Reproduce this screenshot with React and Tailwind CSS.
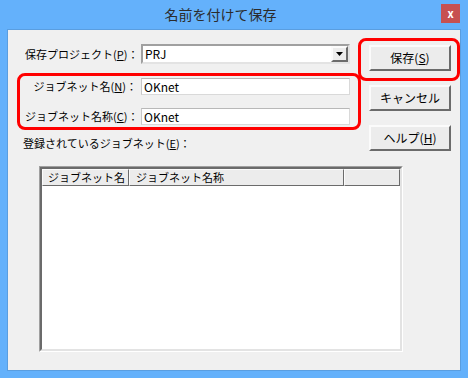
import React from 'react'

const font = { fontFamily: '"Noto Sans CJK JP", "Noto Sans", sans-serif' }

function Btn({ children }) {
  return (
    <div className="flex h-[26px] w-[82px] items-center justify-center whitespace-nowrap border-2 border-t-[#fbfbfb] border-l-[#fbfbfb] border-r-[#6b6b6b] border-b-[#6b6b6b] bg-[#ececec] text-[12px] leading-none text-black">
      {children}
    </div>
  )
}

function Field({ value }) {
  return (
    <div className="flex h-[17px] w-[209px] shrink-0 items-center border border-[#d9d9d9] border-t-[#b8b8b8] border-l-[#c8c8c8] bg-white pl-[2px] text-[12px] leading-none">
      {value}
    </div>
  )
}

export default function App() {
  return (
    <div className="h-[378px] w-[468px] overflow-hidden bg-[#64b1fb] text-black" style={font}>
      {/* title bar */}
      <div className="flex h-[29px] items-start">
        <div className="w-[441px] pt-[5px] text-center text-[14px] leading-[18px] text-[#2b2b2b]">
          名前を付けて保存
        </div>
        <div className="mt-[4px] flex h-[19px] w-[19px] items-center justify-center bg-[#c75050] text-[11px] font-bold leading-none text-white">
          x
        </div>
      </div>

      {/* client area */}
      <div className="mx-[7px] h-[342px] border border-[#5a9ee0] bg-[#f0f0f0] pl-[9px]">
        <div className="flex">
          {/* left column */}
          <div className="w-[341px] shrink-0">
            <div className="mt-[14px] flex h-[20px] items-center">
              <div className="ml-[8px] w-[116px] shrink-0 whitespace-nowrap text-[11px] leading-none">
                保存プロジェクト(<u>P</u>)：
              </div>
              <div className="flex h-[20px] w-[209px] shrink-0 items-stretch border-2 border-t-[#a0a0a0] border-l-[#a0a0a0] border-r-[#e3e3e3] border-b-[#e3e3e3] bg-white">
                <div className="flex flex-1 items-center pl-[2px] text-[12px] leading-none">PRJ</div>
                <div className="flex w-[17px] items-center justify-center border-2 border-t-[#fbfbfb] border-l-[#fbfbfb] border-r-[#6b6b6b] border-b-[#6b6b6b] bg-[#ececec]">
                  <svg width="7" height="4" viewBox="0 0 7 4">
                    <path d="M0 0h7L3.5 4z" fill="#000" />
                  </svg>
                </div>
              </div>
            </div>

            <div className="mt-[9px] flex h-[57px] w-[344px] flex-col gap-[13px] rounded-[8px] border-[3px] border-[#ff0000] pl-[5px] pt-[2px]">
              <div className="flex h-[17px] items-center">
                <div className="w-[116px] shrink-0 whitespace-nowrap pr-[4px] text-right text-[11px] leading-none">
                  ジョブネット名(<u>N</u>)：
                </div>
                <Field value="OKnet" />
              </div>
              <div className="flex h-[17px] items-center">
                <div className="w-[116px] shrink-0 whitespace-nowrap pr-[4px] text-right text-[11px] leading-none">
                  ジョブネット名称(<u>C</u>)：
                </div>
                <Field value="OKnet" />
              </div>
            </div>

            <div className="ml-[6px] mt-[6px] whitespace-nowrap text-[11px] leading-[14px]">
              登録されているジョブネット(<u>E</u>)：
            </div>
          </div>

          {/* right column */}
          <div className="flex flex-col">
            <div className="mt-[8px] h-[43px] w-[102px] rounded-[8px] border-[3px] border-[#ff0000] pl-[8px] pt-[4px]">
              <Btn>保存(<u>S</u>)</Btn>
            </div>
            <div className="ml-[11px] mt-[4px]">
              <Btn>キャンセル</Btn>
            </div>
            <div className="ml-[11px] mt-[14px]">
              <Btn>ヘルプ(<u>H</u>)</Btn>
            </div>
          </div>
        </div>

        {/* list view */}
        <div className="ml-[22px] mt-[15px] h-[186px] w-[364px] border border-t-[#a0a0a0] border-l-[#a0a0a0] border-r-[#ffffff] border-b-[#ffffff]">
          <div className="flex h-full flex-col border-2 border-t-[#6b6b6b] border-l-[#6b6b6b] border-r-[#e3e3e3] border-b-[#e3e3e3] bg-white">
            <div className="flex h-[17px] whitespace-nowrap text-[11px] leading-none">
              <div className="flex w-[87px] shrink-0 items-center overflow-hidden border border-t-[#fbfbfb] border-l-[#fbfbfb] border-r-[#6b6b6b] border-b-[#6b6b6b] bg-[#ececec] pl-[5px]">
                ジョブネット名
              </div>
              <div className="flex w-[215px] shrink-0 items-center border border-t-[#fbfbfb] border-l-[#fbfbfb] border-r-[#6b6b6b] border-b-[#6b6b6b] bg-[#ececec] pl-[6px]">
                ジョブネット名称
              </div>
              <div className="flex-1 border border-t-[#fbfbfb] border-l-[#fbfbfb] border-r-[#6b6b6b] border-b-[#6b6b6b] bg-[#ececec]" />
            </div>
          </div>
        </div>
      </div>
    </div>
  )
}
